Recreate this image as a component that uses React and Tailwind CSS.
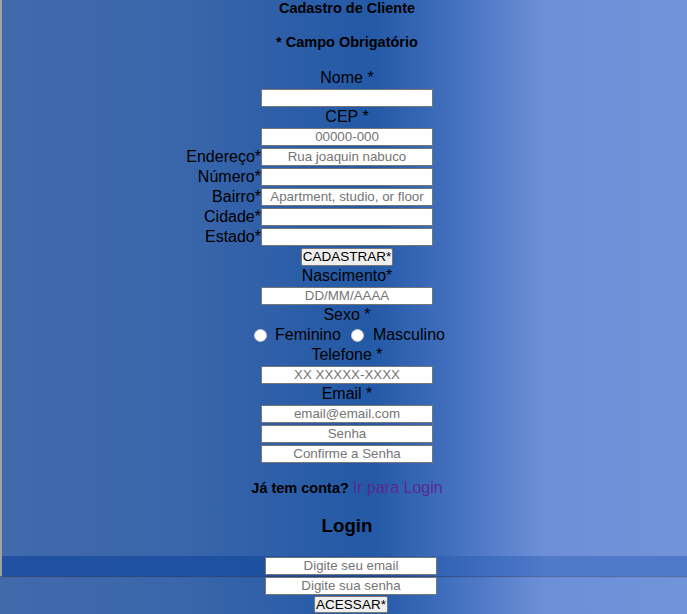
const field = "block w-[172px] h-[18px] bg-white border border-[#767676] text-center text-[13.33px] text-black placeholder:text-[#757575] outline-none";
const label = "h-[20px] leading-[20px] text-[16px] text-black text-center";

function Row({ name, placeholder }) {
  return (
    <div className="grid grid-cols-[1fr_172px_1fr] mt-[2px]">
      <span className="h-[18px] leading-[18px] text-[16px] text-right text-black">{name}</span>
      <input className={field} placeholder={placeholder} />
      <span />
    </div>
  );
}

export default function App() {
  return (
    <div
      className="min-h-screen bg-[linear-gradient(to_right,#416aab_0%,#3b66ab_25%,#2359a6_54%,#3d6cbb_64%,#6d8fd7_79%,#7193da_100%)]"
      style={{ fontFamily: '"Liberation Sans", Arial, sans-serif' }}
    >
      <div className="border-l-2 border-[#a3a3a3]">
        <div className="pl-[5px] flex flex-col items-center">
          <div className="h-[16px] leading-[16px] text-[14.5px] font-bold text-black">Cadastro de Cliente</div>
          <div className="mt-[18px] h-[16px] leading-[16px] text-[14.5px] font-bold text-black">* Campo Obrigatório</div>

          <div className={`mt-[18px] ${label}`}>Nome *</div>
          <input className={`mt-[1px] ${field}`} />
          <div className={label}>CEP *</div>
          <input className={`mt-[1px] ${field}`} placeholder="00000-000" />
        </div>

        <div className="pl-[5px]">
          <Row name="Endereço*" placeholder="Rua joaquin nabuco" />
          <Row name="Número*" />
          <Row name="Bairro*" placeholder="Apartment, studio, or floor" />
          <Row name="Cidade*" />
          <Row name="Estado*" />
        </div>

        <div className="pl-[5px] flex flex-col items-center">
          <button className="mt-[2px] h-[18px] px-[1px] leading-[16px] text-[13.5px] text-black bg-[#efefef] border border-[#767676] rounded-[2px]">
            CADASTRAR*
          </button>
          <div className={label}>Nascimento*</div>
          <input className={`mt-[1px] ${field}`} placeholder="DD/MM/AAAA" />
          <div className={label}>Sexo *</div>
          <div className="ml-[5px] h-[20px] flex items-center text-[16px] text-black">
            <input type="radio" name="sexo" className="appearance-none w-[13px] h-[13px] rounded-full bg-white border border-[#c8c8c8]" />
            <span className="ml-[8px]">Feminino</span>
            <input type="radio" name="sexo" className="ml-[10px] appearance-none w-[13px] h-[13px] rounded-full bg-white border border-[#c8c8c8]" />
            <span className="ml-[9px]">Masculino</span>
          </div>
          <div className={label}>Telefone *</div>
          <input className={`mt-[1px] ${field}`} placeholder="XX XXXXX-XXXX" />
          <div className={label}>Email *</div>
          <input className={`mt-[1px] ${field}`} placeholder="email@email.com" />
          <input type="password" className={`mt-[2px] ${field}`} placeholder="Senha" />
          <input type="password" className={`mt-[2px] ${field}`} placeholder="Confirme a Senha" />

          <div className="mt-[15px] h-[20px] leading-[20px] text-black">
            <span className="text-[14.5px] font-bold">Já tem conta? </span>
            <a href="#login" className="text-[16px] text-[#5a2a8e]">Ir para Login</a>
          </div>
          <h3 className="mt-[17px] h-[22px] leading-[22px] text-[18.72px] font-bold text-black">Login</h3>
        </div>

        <div className="mt-[19px] h-[20px] py-[1px] pl-[13px] flex justify-center bg-[linear-gradient(to_right,#2052a1_0%,#1d50a0_54%,#3565b6_65%,#5179ca_80%,#5179ca_100%)] shadow-[0_1px_1px_rgba(0,0,0,0.25)]">
          <input className={field} placeholder="Digite seu email" />
        </div>
      </div>

      <div className="pl-[15px] flex flex-col items-center">
        <input type="password" className={`mt-[1px] ${field}`} placeholder="Digite sua senha" />
        <button className="mt-[1px] h-[17px] px-[1px] leading-[15px] text-[13.5px] text-black bg-[#efefef] border border-[#767676] rounded-[2px]">
          ACESSAR*
        </button>
      </div>
    </div>
  );
}
